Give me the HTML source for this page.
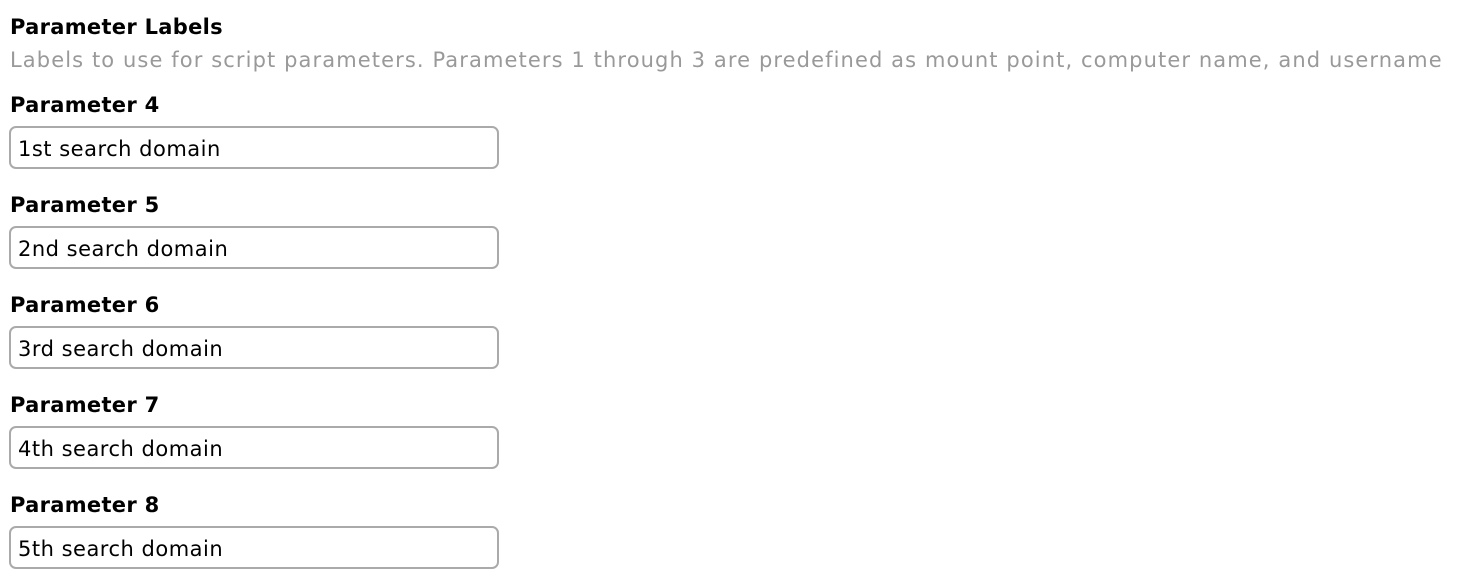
<!DOCTYPE html>
<html><head><meta charset="utf-8"><style>
html,body{margin:0;padding:0;background:#fff;width:1468px;height:585px;overflow:hidden}
body{font-family:"DejaVu Sans","Liberation Sans",sans-serif;position:relative}
.h{position:absolute;left:10px;font-weight:bold;font-size:21px;color:#000;line-height:26px;white-space:nowrap;letter-spacing:0.3px}
.d{position:absolute;left:10px;top:47px;font-size:21px;color:#999;line-height:26px;white-space:nowrap;letter-spacing:1.1px}
.in{position:absolute;left:9px;width:486px;height:39px;border:2px solid #aaa;border-radius:7px;box-sizing:content-box}
.in span{position:absolute;left:7px;top:8px;font-size:21px;line-height:26px;color:#000;white-space:nowrap;letter-spacing:0.5px}
</style></head><body>
<div class="h" style="top:14px">Parameter Labels</div>
<div class="d">Labels to use for script parameters. Parameters 1 through 3 are predefined as mount point, computer name, and username</div>
<div class="h" style="top:92px">Parameter 4</div>
<div class="in" style="top:126px"><span>1st search domain</span></div>
<div class="h" style="top:192px">Parameter 5</div>
<div class="in" style="top:226px"><span>2nd search domain</span></div>
<div class="h" style="top:292px">Parameter 6</div>
<div class="in" style="top:326px"><span>3rd search domain</span></div>
<div class="h" style="top:392px">Parameter 7</div>
<div class="in" style="top:426px"><span>4th search domain</span></div>
<div class="h" style="top:492px">Parameter 8</div>
<div class="in" style="top:526px"><span>5th search domain</span></div>
</body></html>
